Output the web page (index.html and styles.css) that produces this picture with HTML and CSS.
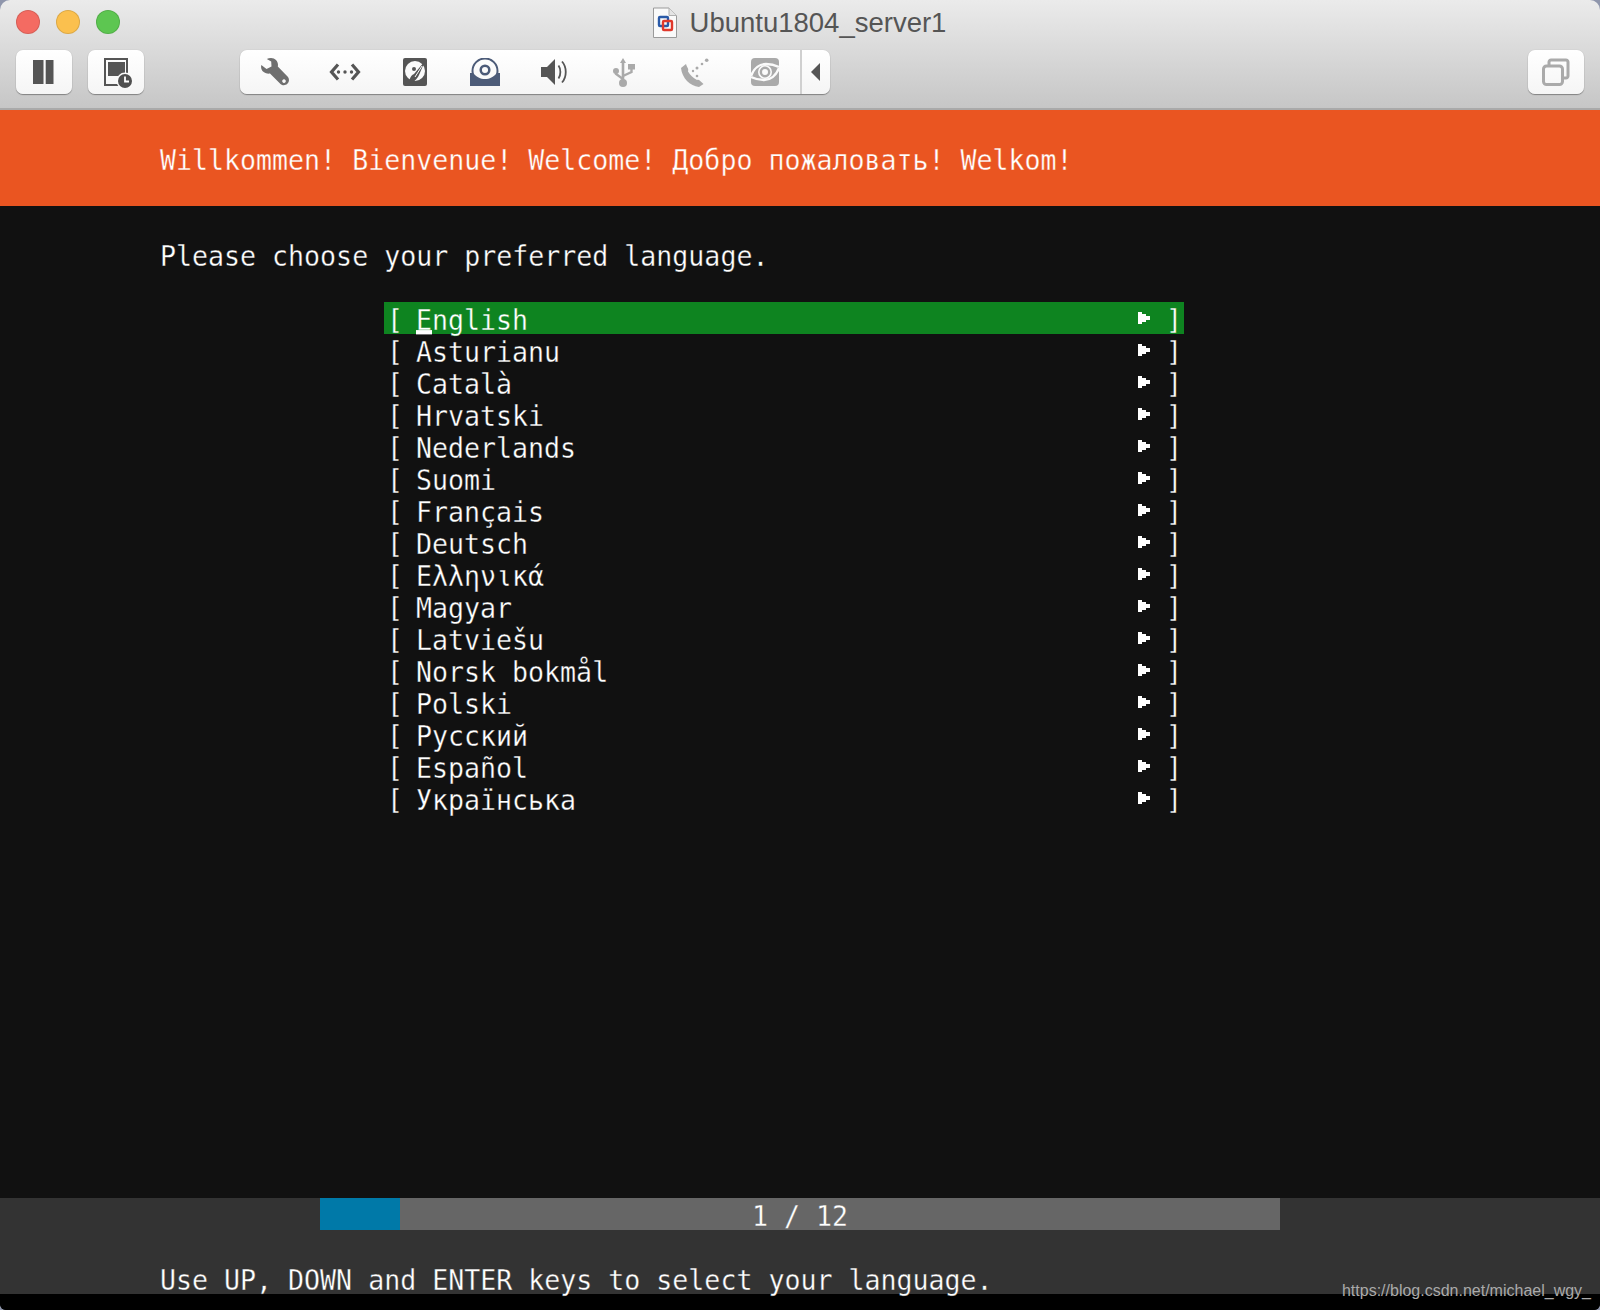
FILE: index.html
```html
<!DOCTYPE html>
<html lang="en">
<head>
<meta charset="utf-8">
<title>Ubuntu1804_server1</title>
<link rel="stylesheet" href="styles.css">
</head>
<body>
<div class="window">
  <header class="chrome">
    <div class="titlerow">
      <div class="lights">
        <span class="light red"></span><span class="light yellow"></span><span class="light green"></span>
      </div>
      <div class="title">
        <svg class="docicon" width="26" height="32" viewBox="0 0 26 32">
          <path d="M1.500 1H17L24.500 8.500V30.500H1.500Z" fill="#fafafa" stroke="#9a9a9a"/>
          <path d="M17 1V8.500H24.500" fill="#e4e4e4" stroke="#b0b0b0"/>
          <rect x="7" y="10" width="9" height="9" rx="1" fill="none" stroke="#2a5aa8" stroke-width="2.400"/>
          <rect x="11" y="14" width="9" height="9" rx="1" fill="none" stroke="#e0382c" stroke-width="2.400"/>
        </svg>
        <span class="titletext">Ubuntu1804_server1</span>
      </div>
      <div class="titlespacer"></div>
    </div>
    <div class="toolbar">
      <button class="btn" type="button">
        <svg width="22" height="24" viewBox="0 0 22 24"><path d="M0 0H10.500V24H0ZM12.700 0H20.500V24H12.700Z" fill="#555"/></svg>
      </button>
      <button class="btn" type="button">
        <svg width="32" height="32" viewBox="0 0 32 32">
          <path d="M5 3H27V29H5Z" fill="none" stroke="#555" stroke-width="2"/>
          <rect x="8" y="6" width="17" height="14" fill="#555"/>
          <circle cx="25" cy="25" r="8.500" fill="#fbfbfb"/>
          <circle cx="25" cy="25" r="7" fill="#4f4f4f"/>
          <path d="M25 20.500V25.500H29" fill="none" stroke="#fff" stroke-width="1.800"/>
        </svg>
      </button>
      <div class="group">
        <span class="cell">
          <svg width="28" height="28" viewBox="0 0 28 28">
            <path fill-rule="evenodd" fill="#6f6f6f" d="M10 0C14 0 17 3 17 7L16.800 8.500L27 19C28.500 21 28.300 23.800 26.300 25.800C24.300 27.800 21.300 27.600 19.500 26L9 15.500C5 16.200 1.500 14.200.4 11C0 9.500 0 8.500.3 7L5.500 11L10.500 8.500L10.200 3.500L5.800 1C7 .3 8.500 0 10 0ZM23 21.300A1.800 1.800 0 1 0 23.010 21.300Z"/>
          </svg>
        </span>
        <span class="cell">
          <svg width="34" height="18" viewBox="0 0 34 18">
            <path d="M10 1.500L3.500 9L10 16.500M24 1.500L30.500 9L24 16.500" fill="none" stroke="#555" stroke-width="3.200"/>
            <circle cx="10.500" cy="9" r="1.700" fill="#555"/><circle cx="17" cy="9" r="1.700" fill="#555"/><circle cx="23.500" cy="9" r="1.700" fill="#555"/>
          </svg>
        </span>
        <span class="cell">
          <svg width="24" height="28" viewBox="0 0 24 28">
            <rect width="24" height="28" rx="2" fill="#555"/>
            <circle cx="12" cy="13" r="10" fill="#fbfbfb"/>
            <path d="M22 3L16 17C14 22 9 25 7 25C6 22 7 18 11 16Z" fill="#555"/>
            <path d="M19 8L12 19" stroke="#fbfbfb" stroke-width="1"/>
            <circle cx="11" cy="11" r="2" fill="#555"/>
          </svg>
        </span>
        <span class="cell">
          <svg width="30" height="28" viewBox="0 0 30 28">
            <circle cx="15" cy="13" r="12.500" fill="none" stroke="#4c5b78" stroke-width="2"/>
            <circle cx="15" cy="12" r="4.300" fill="none" stroke="#4c5b78" stroke-width="2.500"/>
            <path d="M0 15H3C7 19 10 21 15 21C20 21 23 19 27 15H30V28H0Z" fill="#4c5b78"/>
          </svg>
        </span>
        <span class="cell">
          <svg width="30" height="28" viewBox="0 0 30 28">
            <path d="M1 9H7L15 1V27L7 19H1Z" fill="#555"/>
            <path d="M18.500 7.500C21 11 21 17 18.500 20.500M22 3.500C27 9 27 19 22 24.500" fill="none" stroke="#555" stroke-width="1.800"/>
          </svg>
        </span>
        <span class="cell">
          <svg width="24" height="30" viewBox="0 0 24 30">
            <g fill="#aaa">
              <path d="M10 1L13 6H11.300V24H8.700V6H7Z"/>
              <circle cx="3" cy="14" r="3"/>
              <rect x="15" y="7" width="7" height="5.500"/>
              <circle cx="10" cy="26" r="4"/>
            </g>
            <path d="M3 15V17L10 22M18.500 12V15L10 19" fill="none" stroke="#aaa" stroke-width="2.400"/>
          </svg>
        </span>
        <span class="cell">
          <svg width="28" height="30" viewBox="0 0 28 30">
            <path d="M0 11L5 7C6 11 8 11 7 14.500C9 18 12 21 16 23C18 22 19 24 22.500 27L18 30C9 29 1 21 0 11Z" fill="#aaa"/>
            <g fill="#aaa"><circle cx="25.700" cy="3.300" r="1.800"/><circle cx="21" cy="7" r="1.300"/><circle cx="16" cy="11" r="1.500"/><circle cx="12" cy="14" r="1.200"/><circle cx="16" cy="19" r="1.300"/></g>
          </svg>
        </span>
        <span class="cell">
          <svg width="28" height="28" viewBox="0 0 28 28">
            <rect width="28" height="28" rx="4" fill="#aaa"/>
            <circle cx="14" cy="14" r="7" fill="#fbfbfb"/>
            <circle cx="14" cy="14" r="4.200" fill="#fbfbfb" stroke="#aaa" stroke-width="2.400"/>
            <path d="M0 18C3 10 9 6 15 6C20 6 24 7 28 9M28 10C25 18 19 22 13 22C8 22 4 21 0 19" fill="none" stroke="#fbfbfb" stroke-width="2.400"/>
          </svg>
        </span>
        <span class="caret">
          <svg width="10" height="18" viewBox="0 0 10 18"><path d="M9 0V18L0 9Z" fill="#555"/></svg>
        </span>
      </div>
      <div class="grow"></div>
      <button class="btn" type="button">
        <svg width="28" height="28" viewBox="0 0 28 28">
          <path d="M7 8V4C7 3 8 2 9 2H24C25 2 26 3 26 4V18C26 19 25 20 24 20H21" fill="none" stroke="#aaa" stroke-width="3"/>
          <rect x="1.500" y="8" width="19" height="18.500" rx="3" fill="none" stroke="#aaa" stroke-width="3"/>
        </svg>
      </button>
    </div>
  </header>
  <main class="term">
    <div class="banner"><div class="line indent"><span class="t">Willkommen! Bienvenue! Welcome! Добро пожаловать! Welkom!</span></div></div>
    <div class="body">
      <div class="line indent prompt"><span class="t">Please choose your preferred language.</span></div>
      <ul class="langs">
        <li class="lang sel"><span class="t open">[</span><span class="name"><span class="t cursor">English</span></span><svg class="arrow" width="12" height="12" viewBox="0 0 12 12"><path d="M0 0H4V2H8V4H12V8H8V10H4V12H0Z"/></svg><span class="t close">]</span></li>
        <li class="lang"><span class="t open">[</span><span class="name"><span class="t">Asturianu</span></span><svg class="arrow" width="12" height="12" viewBox="0 0 12 12"><path d="M0 0H4V2H8V4H12V8H8V10H4V12H0Z"/></svg><span class="t close">]</span></li>
        <li class="lang"><span class="t open">[</span><span class="name"><span class="t">Català</span></span><svg class="arrow" width="12" height="12" viewBox="0 0 12 12"><path d="M0 0H4V2H8V4H12V8H8V10H4V12H0Z"/></svg><span class="t close">]</span></li>
        <li class="lang"><span class="t open">[</span><span class="name"><span class="t">Hrvatski</span></span><svg class="arrow" width="12" height="12" viewBox="0 0 12 12"><path d="M0 0H4V2H8V4H12V8H8V10H4V12H0Z"/></svg><span class="t close">]</span></li>
        <li class="lang"><span class="t open">[</span><span class="name"><span class="t">Nederlands</span></span><svg class="arrow" width="12" height="12" viewBox="0 0 12 12"><path d="M0 0H4V2H8V4H12V8H8V10H4V12H0Z"/></svg><span class="t close">]</span></li>
        <li class="lang"><span class="t open">[</span><span class="name"><span class="t">Suomi</span></span><svg class="arrow" width="12" height="12" viewBox="0 0 12 12"><path d="M0 0H4V2H8V4H12V8H8V10H4V12H0Z"/></svg><span class="t close">]</span></li>
        <li class="lang"><span class="t open">[</span><span class="name"><span class="t">Français</span></span><svg class="arrow" width="12" height="12" viewBox="0 0 12 12"><path d="M0 0H4V2H8V4H12V8H8V10H4V12H0Z"/></svg><span class="t close">]</span></li>
        <li class="lang"><span class="t open">[</span><span class="name"><span class="t">Deutsch</span></span><svg class="arrow" width="12" height="12" viewBox="0 0 12 12"><path d="M0 0H4V2H8V4H12V8H8V10H4V12H0Z"/></svg><span class="t close">]</span></li>
        <li class="lang"><span class="t open">[</span><span class="name"><span class="t">Ελληνικά</span></span><svg class="arrow" width="12" height="12" viewBox="0 0 12 12"><path d="M0 0H4V2H8V4H12V8H8V10H4V12H0Z"/></svg><span class="t close">]</span></li>
        <li class="lang"><span class="t open">[</span><span class="name"><span class="t">Magyar</span></span><svg class="arrow" width="12" height="12" viewBox="0 0 12 12"><path d="M0 0H4V2H8V4H12V8H8V10H4V12H0Z"/></svg><span class="t close">]</span></li>
        <li class="lang"><span class="t open">[</span><span class="name"><span class="t">Latviešu</span></span><svg class="arrow" width="12" height="12" viewBox="0 0 12 12"><path d="M0 0H4V2H8V4H12V8H8V10H4V12H0Z"/></svg><span class="t close">]</span></li>
        <li class="lang"><span class="t open">[</span><span class="name"><span class="t">Norsk bokmål</span></span><svg class="arrow" width="12" height="12" viewBox="0 0 12 12"><path d="M0 0H4V2H8V4H12V8H8V10H4V12H0Z"/></svg><span class="t close">]</span></li>
        <li class="lang"><span class="t open">[</span><span class="name"><span class="t">Polski</span></span><svg class="arrow" width="12" height="12" viewBox="0 0 12 12"><path d="M0 0H4V2H8V4H12V8H8V10H4V12H0Z"/></svg><span class="t close">]</span></li>
        <li class="lang"><span class="t open">[</span><span class="name"><span class="t">Русский</span></span><svg class="arrow" width="12" height="12" viewBox="0 0 12 12"><path d="M0 0H4V2H8V4H12V8H8V10H4V12H0Z"/></svg><span class="t close">]</span></li>
        <li class="lang"><span class="t open">[</span><span class="name"><span class="t">Español</span></span><svg class="arrow" width="12" height="12" viewBox="0 0 12 12"><path d="M0 0H4V2H8V4H12V8H8V10H4V12H0Z"/></svg><span class="t close">]</span></li>
        <li class="lang"><span class="t open">[</span><span class="name"><span class="t">Українська</span></span><svg class="arrow" width="12" height="12" viewBox="0 0 12 12"><path d="M0 0H4V2H8V4H12V8H8V10H4V12H0Z"/></svg><span class="t close">]</span></li>
      </ul>
    </div>
    <div class="foot">
      <div class="progress"><div class="progfill"></div><div class="progtext"><span class="t">1 / 12</span></div></div>
      <div class="line indent hint"><span class="t">Use UP, DOWN and ENTER keys to select your language.</span></div>
    </div>
    <div class="blackstrip"></div>
    <div class="watermark">https://blog.csdn.net/michael_wgy_</div>
  </main>
</div>
</body>
</html>
```
FILE: styles.css
```css
* { box-sizing: border-box; }
html, body { margin: 0; padding: 0; }
body { width: 1600px; height: 1310px; overflow: hidden; background: #8f96ac; }
.window { width: 1600px; height: 1310px; display: flex; flex-direction: column; border-radius: 10px 10px 6px 6px; overflow: hidden; }
.chrome { height: 110px; flex: none; background: linear-gradient(#ebebeb, #c6c6c6); border-bottom: 2px solid #a9a9a9; display: flex; flex-direction: column; font-family: "Liberation Sans", Arial, sans-serif; }
.titlerow { height: 50px; flex: none; display: grid; grid-template-columns: 1fr auto 1fr; align-items: start; }
.lights { display: flex; gap: 16px; padding: 10px 0 0 16px; }
.light { width: 24px; height: 24px; border-radius: 50%; border: 1px solid rgba(0,0,0,.12); }
.red { background: #f46b62; }
.yellow { background: #fbc04e; }
.green { background: #5dc651; }
.title { display: flex; align-items: center; gap: 12px; padding: 6px 2px 0 0; }
.titletext { font-size: 27.5px; line-height: 34px; color: #555; }
.toolbar { height: 44px; display: flex; padding: 0 16px; gap: 16px; flex: none; }
.btn { width: 56px; height: 44px; padding: 0; border: none; border-radius: 7px; background: linear-gradient(#ffffff, #f5f5f5); box-shadow: 0 1px 1px rgba(0,0,0,.35), 0 0 1px rgba(0,0,0,.2); display: flex; align-items: center; justify-content: center; }
.group { margin-left: 80px; width: 590px; height: 44px; display: flex; border-radius: 7px; background: linear-gradient(#ffffff, #f5f5f5); box-shadow: 0 1px 1px rgba(0,0,0,.35), 0 0 1px rgba(0,0,0,.2); }
.cell { width: 70px; display: flex; align-items: center; justify-content: center; }
.caret { flex: 1; border-left: 2px solid #d0d0d0; display: flex; align-items: center; justify-content: center; }
.grow { flex: 1; }
.term { --bg: #111; position: relative; flex: 1; background: var(--bg); color: #fff; font-family: "DejaVu Sans Mono", "Liberation Mono", monospace; font-size: 26.6px; }
.line { height: 32px; line-height: 32px; }
.t { display: inline-block; white-space: pre; -webkit-text-stroke: .3px var(--bg); transform: translateY(3px) scaleY(1.08); transform-origin: 0 24px; }
.indent { padding-left: 160px; }
.banner { --bg: #ea5521; height: 96px; padding-top: 32px; background: var(--bg); }
.body { height: 992px; padding-top: 32px; }
.prompt { margin-bottom: 32px; }
.langs { list-style: none; margin: 0 0 0 384px; padding: 0; width: 800px; }
.lang { height: 32px; line-height: 32px; display: flex; align-items: center; }
.sel { --bg: #0e8420; background: var(--bg); }
.open { margin: 0 -3px 0 3px; }
.name { flex: 1; padding-left: 16px; }
.arrow { fill: #fff; }
.close { margin: 0 2px 0 16px; }
.cursor { position: relative; }
.cursor::after { content: ""; position: absolute; left: 0; bottom: 3px; width: 16px; height: 4px; background: #fff; }
.foot { --bg: #333; height: 96px; background: var(--bg); }
.progress { --bg: #666; position: relative; margin-left: 320px; width: 960px; height: 32px; line-height: 32px; background: var(--bg); margin-bottom: 32px; text-align: center; }
.progfill { position: absolute; left: 0; top: 0; width: 80px; height: 32px; background: #0079a8; }
.progtext { position: relative; }
.blackstrip { height: 16px; background: #000; }
.watermark { position: absolute; right: 9px; bottom: 9px; font-family: "Liberation Sans", Arial, sans-serif; font-size: 16px; line-height: 20px; color: #aaa; }
```
